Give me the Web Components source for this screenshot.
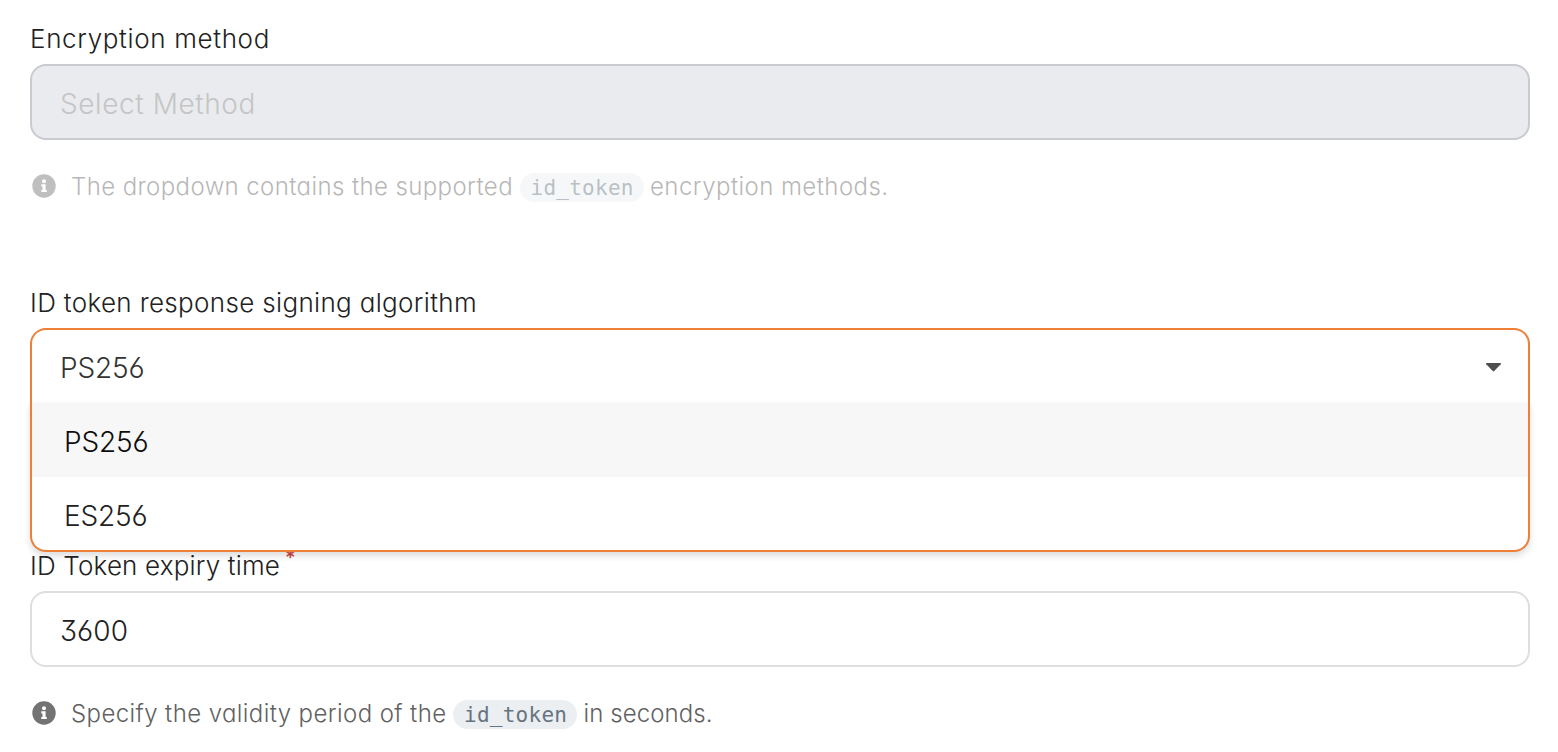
<!DOCTYPE html>
<html lang="en">
<head>
<meta charset="utf-8">
<title>ID token settings</title>
<style>
body { margin: 0; background: #fff; overflow: hidden; font-family: Inter, Lato, sans-serif; font-weight: 340; font-feature-settings: "cv03", "cv09", "cv11"; color: #212121; }
</style>
</head>
<body>
<settings-form>
  <form-field>
    <tracked-text slot="label" w="240">Encryption method</tracked-text>
    <text-box disabled><tracked-text w="196">Select Method</tracked-text></text-box>
    <hint-line slot="hint" disabled><tracked-text w="442">The dropdown contains the supported</tracked-text><code-chip>id_token</code-chip><tracked-text w="238.5">encryption methods.</tracked-text></hint-line>
  </form-field>
  <form-field>
    <tracked-text slot="label" w="447">ID token response signing algorithm</tracked-text>
    <select-box>
      <tracked-text w="84.5">PS256</tracked-text>
      <select-option slot="options" selected><tracked-text w="84.5">PS256</tracked-text></select-option>
      <select-option slot="options"><tracked-text w="83.5">ES256</tracked-text></select-option>
    </select-box>
  </form-field>
  <form-field required>
    <tracked-text slot="label" w="250">ID Token expiry time</tracked-text>
    <text-box><tracked-text w="68">3600</tracked-text></text-box>
    <hint-line slot="hint"><tracked-text w="375.5">Specify the validity period of the</tracked-text><code-chip>id_token</code-chip><tracked-text w="129">in seconds.</tracked-text></hint-line>
  </form-field>
</settings-form>
<script>
function define(name, markup, setup) {
  const template = document.createElement('template');
  template.innerHTML = markup;
  customElements.define(name, class extends HTMLElement {
    constructor() {
      super();
      this.attachShadow({ mode: 'open' }).append(template.content.cloneNode(true));
    }
    connectedCallback() { if (setup) setup(this); }
  });
}

define('settings-form', `<style>
  :host { display: flex; flex-direction: column; box-sizing: border-box; height: 752px; padding: 20px 28px 0 30px; }
</style><slot></slot>`);

define('form-field', `<style>
  :host { display: flex; flex-direction: column; height: 264px; flex: none; }
  :host([required]) { height: 204px; margin-top: -1px; }
  .label { display: flex; align-items: flex-start; height: 44px; font-size: 26px; line-height: 38px; }
  .star { display: none; margin-left: 5px; font: 400 25px/26px Lato, sans-serif; color: #d03a3a; -webkit-text-stroke: .3px #d03a3a; }
  :host([required]) .star { display: block; margin-top: -1px; }
</style><div class="label"><slot name="label"></slot><span class="star">*</span></div><slot></slot><slot name="hint"></slot>`);

define('text-box', `<style>
  :host { display: flex; align-items: center; box-sizing: border-box; height: 76px; padding: 4px 28px 0; border: 2px solid #dededf; border-radius: 16px; background: #fff; font-size: 28px; line-height: 36px; }
  :host([disabled]) { background: #eaebef; border-color: #c9cbd0; color: #c5c5c5; }
</style><slot></slot>`);

define('select-box', `<style>
  :host { display: block; position: relative; z-index: 2; height: 76px; font-size: 28px; line-height: 36px; }
  .value { display: flex; align-items: center; justify-content: space-between; box-sizing: border-box; height: 76px; padding: 2px 27.500px 0 28px; border: 2px solid #ee7f36; border-bottom: 0; border-radius: 16px 16px 0 0; background: #fff; color: #333; }
  svg { display: block; margin-top: -2px; }
  .menu { position: absolute; top: 74px; left: 0; right: 0; box-sizing: border-box; height: 150px; border: 2px solid #ee7f36; border-top: 0; border-radius: 0 0 16px 16px; background: #fff; box-shadow: 0 4px 6px rgba(34,36,38,.15); overflow: hidden; }
</style><div class="value"><slot></slot><svg width="15" height="9" viewBox="0 0 15 9"><path d="M.8 0h13.400c.7 0 1 .7.600 1.200L8.200 8.100c-.4.4-1 .4-1.400 0L.2 1.200C-.2.700.1 0 .8 0Z" fill="#4d4d4d"/></svg></div>
<div class="menu"><slot name="options"></slot></div>`);

define('select-option', `<style>
  :host { display: flex; align-items: center; box-sizing: border-box; height: 74px; padding: 5px 32px 0; }
  :host([selected]) { background: linear-gradient(#fafafa 1px, #f7f7f7 1px); height: 75px; margin-bottom: -1px; padding-top: 4px; color: #0d0d0d; }
</style><slot></slot>`);

define('hint-line', `<style>
  :host { display: flex; align-items: center; height: 30px; margin-top: 32px; padding-left: 2px; font-size: 24px; line-height: 30px; color: #616161; }
  :host([disabled]) { opacity: .45; }
  svg { display: block; margin: -3px 15px 0 0; flex: none; }
</style><svg width="24" height="24" viewBox="0 0 24 24"><circle cx="12" cy="12" r="11.7" fill="#737373"/><circle cx="12" cy="7.2" r="2" fill="#fff"/><path d="M9.300 10.300h4.300v5.600h1.200v2.200H9.300v-2.200h1.200v-3.400H9.300Z" fill="#fff"/></svg><slot></slot>`);

define('code-chip', `<style>
  :host { display: block; box-sizing: border-box; width: 124px; height: 29px; margin: 0 6.500px; border-radius: 15px; padding-left: 11px; background: #eceff2; color: #667480; font: 400 21px/30px "DejaVu Sans Mono", monospace; letter-spacing: .26px; flex: none; }
</style><slot></slot>`);

/* Text tracked to the advance width given by its "w" attribute. */
define('tracked-text', `<style>
  :host { display: block; white-space: nowrap; flex: none; }
</style><slot></slot>`, el => {
  const w = Number(el.getAttribute('w'));
  const range = document.createRange();
  range.selectNodeContents(el);
  const natural = range.getBoundingClientRect().width;
  el.style.letterSpacing = (w - natural) / el.textContent.length + 'px';
  el.style.width = w + 'px';
});
</script>
</body>
</html>
